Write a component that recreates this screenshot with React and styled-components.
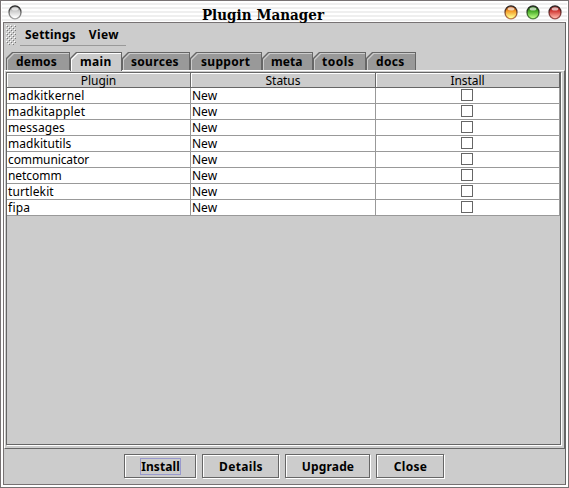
import React from "react";
import styled, { createGlobalStyle } from "styled-components";

const Global = createGlobalStyle`
  * { box-sizing: border-box; }
  body { margin: 0; background: #fff; overflow: hidden; }
`;

const Window = styled.div`
  width: 569px;
  height: 488px;
  border: 1px solid #777273;
  padding: 0 1px 2px 2px;
  background: #fff;
  color: #000;
  font-family: "Noto Sans", sans-serif;
  font-size: 12px;
`;

const TitleBar = styled.header`
  height: 21px;
  margin-left: -1px;
  padding: 0 4px 0 5px;
  display: flex;
  align-items: center;
  justify-content: space-between;
  background: repeating-linear-gradient(#fff 0 2px, #efefef 2px 4px);
`;

const Title = styled.h1`
  margin: 6px 0 0 0;
  font: 700 15px/20px "DejaVu Serif Condensed", "DejaVu Serif", serif;
  letter-spacing: ${(p) => p.$spacing}px;
  white-space: nowrap;
`;

const Lights = styled.div`
  display: flex;
  gap: 6px;
`;

const Content = styled.main`
  width: 563px;
  height: 463px;
  border: 1px solid #777273;
  border-right-color: #666;
  background: #ccc;
  display: flex;
  flex-direction: column;
`;

const MenuRow = styled.div`
  height: 29px;
  flex: none;
  display: flex;
`;

const Grip = styled.svg`
  margin: 2px 0 0 2px;
`;

const MenuBar = styled.nav`
  width: 106px;
  height: 23px;
  margin-left: 4px;
  padding: 3px 0 0 5px;
  border-bottom: 1px solid #999;
  display: flex;
  gap: 13px;
`;

const Label = styled.span`
  display: block;
  font-weight: ${(p) => (p.$plain ? 400 : 700)};
  font-size: 12px;
  line-height: 18px;
  letter-spacing: ${(p) => p.$spacing || 0}px;
  white-space: nowrap;
`;

const Tabs = styled.div`
  height: 18px;
  flex: none;
  padding-left: 2px;
  display: flex;
`;

const Tab = styled.div`
  position: relative;
  z-index: 0;
  width: ${(p) => p.$width}px;
  height: ${(p) => (p.$selected ? 19 : 18)}px;
  padding: 1px 0 0 ${(p) => p.$indent}px;
  background: #666;
  clip-path: polygon(0 6px, 6px 0, 100% 0, 100% 100%, 0 100%);

  &::before, &::after {
    content: "";
    position: absolute;
    z-index: -1;
    inset: 1px 1px 0 1px;
    background: ${(p) => (p.$selected ? "#fff" : "#ccc")};
    clip-path: polygon(0 6px, 6px 0, 100% 0, 100% 100%, 0 100%);
  }
  &::after {
    inset: 2px 1px 0 2px;
    background: ${(p) => (p.$selected ? "#ccc" : "#999")};
  }
`;

const Pane = styled.section`
  width: 561px;
  height: 379px;
  flex: none;
  border: 1px solid #666;
  border-top-color: #fff;
  border-left-color: #fff;
  padding: 1px 0 0 1px;
`;

const Scroll = styled.div`
  width: 555px;
  height: 373px;
  border: 1px solid #666;
  box-shadow: 1px 1px 0 #fff;
`;

const Columns = styled.div`
  display: grid;
  grid-template-columns: 184px 185px 184px;
`;

const HeadCell = styled.div`
  height: 15px;
  padding-top: 2px;
  border-right: 1px solid #666;
  border-bottom: 1px solid #666;
  box-shadow: inset 1px 1px 0 #fff;
  display: flex;
  justify-content: center;
  align-items: center;
`;

const Cell = styled.div`
  height: 16px;
  padding-left: 1px;
  border-right: 1px solid #999;
  border-bottom: 1px solid #999;
  background: #fff;
  display: flex;
  align-items: center;
  justify-content: ${(p) => (p.$center ? "center" : "flex-start")};
`;

const Check = styled.span`
  width: 12px;
  height: 12px;
  margin: 0 2px 1px 0;
  border: 1px solid #666;
`;

const Buttons = styled.footer`
  display: flex;
  gap: 6px;
  padding: 5px 0 0 120px;
`;

const Button = styled.button`
  width: ${(p) => p.$width}px;
  height: 24px;
  padding: 0;
  border: 1px solid #666;
  border-radius: 0;
  background: #ccc;
  box-shadow: inset 1px 1px 0 #fff, 1px 1px 0 #fff;
  display: flex;
  justify-content: center;
  align-items: center;
  font-family: inherit;
  color: #000;
`;

const Focus = styled.span`
  width: 41px;
  height: 17px;
  padding: 2px 0 0 1px;
  border: 1px solid ${(p) => (p.$on ? "#99c" : "transparent")};
  display: flex;
  justify-content: center;
  align-items: center;
`;

function Orb({ id, dark, mid, light }) {
  return (
    <svg width="16" height="18" viewBox="0 0 16 18">
      <defs>
        <linearGradient id={id} x1="0" y1="0" x2="0" y2="1">
          <stop offset="0" stopColor={dark} />
          <stop offset=".4" stopColor={mid} />
          <stop offset=".9" stopColor={light} />
        </linearGradient>
        <linearGradient id={id + "rim"} x1="0" y1="0" x2="0" y2="1">
          <stop offset="0" stopColor="#222" />
          <stop offset="1" stopColor={dark} stopOpacity=".65" />
        </linearGradient>
      </defs>
      <ellipse cx="8" cy="9.4" rx="6" ry="6.5" fill={`url(#${id})`} stroke={`url(#${id}rim)`} strokeWidth="1.3" />
      <ellipse cx="8" cy="5.9" rx="3.3" ry="1.6" fill="#fff" opacity=".65" />
    </svg>
  );
}

const dots = [];
for (let y = 0; y < 20; y += 2) {
  for (let x = (y / 2) % 2 ? 2 : 0; x < 10; x += 4) dots.push([x, y]);
}

const tabs = [
  ["demos", 64, 0.2, 10],
  ["main", 52, 0.3, 10],
  ["sources", 68, 0.3, 9],
  ["support", 72, 0.3, 11],
  ["meta", 51, 0.1, 9],
  ["tools", 53, 0.5, 9],
  ["docs", 50, 0.3, 10],
];
const plugins = [
  ["madkitkernel", 0.15],
  ["madkitapplet", 0.2],
  ["messages", 0.1],
  ["madkitutils", 0.05],
  ["communicator", -0.1],
  ["netcomm", -0.05],
  ["turtlekit", 0.12],
  ["fipa", 0.25],
];
const buttons = [
  ["Install", 72, 0.1],
  ["Details", 77, 0.35],
  ["Upgrade", 85, 0.15],
  ["Close", 68, 0.3],
];

export default function App() {
  return (
    <>
      <Global />
      <Window>
        <TitleBar>
          <Orb id="menu" dark="#777" mid="#ccc" light="#fff" />
          <Title $spacing={0.05}>Plugin Manager</Title>
          <Lights>
            <Orb id="min" dark="#a33c10" mid="#f59b25" light="#ffff91" />
            <Orb id="max" dark="#164f08" mid="#45aa25" light="#b5fb80" />
            <Orb id="close" dark="#761010" mid="#d33d38" light="#ffb1a5" />
          </Lights>
        </TitleBar>
        <Content>
          <MenuRow>
            <Grip width="10" height="20" shapeRendering="crispEdges">
              {dots.map(([x, y]) => (
                <g key={x + "-" + y}>
                  <rect x={x} y={y} width="1" height="1" fill="#fff" />
                  <rect x={x + 1} y={y + 1} width="1" height="1" fill="#777" />
                </g>
              ))}
            </Grip>
            <MenuBar>
              <Label $spacing={0.2}>Settings</Label>
              <Label $spacing={0.4}>View</Label>
            </MenuBar>
          </MenuRow>
          <Tabs>
            {tabs.map(([name, width, spacing, indent]) => (
              <Tab key={name} $width={width} $indent={indent} $selected={name === "main"}>
                <Label $spacing={spacing}>{name}</Label>
              </Tab>
            ))}
          </Tabs>
          <Pane>
            <Scroll>
              <Columns>
                {["Plugin", "Status", "Install"].map((t) => (
                  <HeadCell key={t}><Label $plain $spacing={-0.05}>{t}</Label></HeadCell>
                ))}
                {plugins.map(([name, spacing]) => (
                  <React.Fragment key={name}>
                    <Cell><Label $plain $spacing={spacing}>{name}</Label></Cell>
                    <Cell><Label $plain>New</Label></Cell>
                    <Cell $center><Check /></Cell>
                  </React.Fragment>
                ))}
              </Columns>
            </Scroll>
          </Pane>
          <Buttons>
            {buttons.map(([name, width, spacing], i) => (
              <Button key={name} $width={width}>
                <Focus $on={i === 0}><Label $spacing={spacing}>{name}</Label></Focus>
              </Button>
            ))}
          </Buttons>
        </Content>
      </Window>
    </>
  );
}
